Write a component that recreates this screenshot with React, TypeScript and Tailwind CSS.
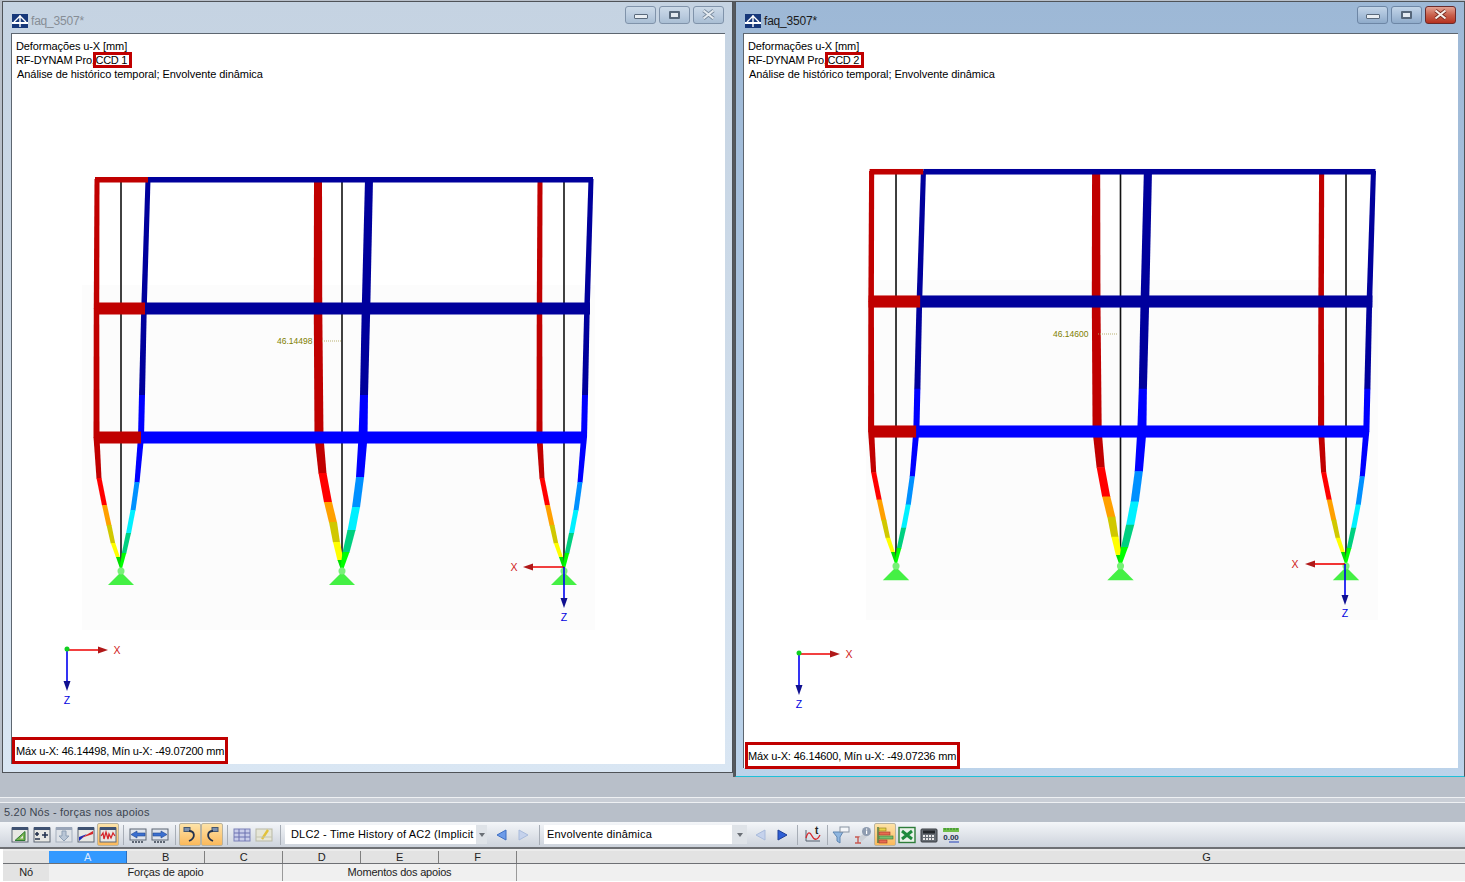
import type { ReactNode } from 'react';

// ── Frame drawing: coordinates are page pixels of the left window ────────────
type Station = [y: number, dx: number, w: number, color?: string];

const DARK_RED = '#c00000';
const DARK_BLUE = '#00009c';
const BLUE = '#0000ff';

const SIDE_RED: Station[] = [
  [179, -24, 5, DARK_RED], [308, -24.5, 5.5, DARK_RED], [437, -24.5, 6, DARK_RED], [478, -22, 5, '#ff0000'],
  [505, -16.5, 5, '#ffa000'], [525, -12, 5, '#d0c800'], [543, -8, 4.5, '#ffff00'], [557, -3, 4, '#00e000'], [568, 0, 2],
];
const SIDE_BLUE: Station[] = [
  [179, 27, 5, DARK_BLUE], [308, 23, 5.5, DARK_BLUE], [395, 21, 6, BLUE], [437, 20, 6, BLUE], [482, 16, 5, '#0090ff'],
  [510, 12, 5, '#00f0ff'], [533, 7.5, 5, '#00d080'], [553, 3, 4.5, '#00ff00'], [568, 0, 2],
];
const MID_RED: Station[] = [
  [179, -24, 8, DARK_RED], [308, -24, 8.5, DARK_RED], [437, -23, 9, DARK_RED], [473, -19.5, 8, '#ff0000'],
  [502, -14, 8, '#ffa000'], [522, -9, 8, '#d0c800'], [542, -5.5, 7, '#ffff00'], [560, -1.5, 6, '#00e000'], [568, 0, 3],
];
const MID_BLUE: Station[] = [
  [179, 27, 8, DARK_BLUE], [308, 24, 8.5, DARK_BLUE], [395, 22, 8, BLUE], [437, 21, 9, BLUE], [477, 18, 8, '#0090ff'],
  [507, 14, 8, '#00f0ff'], [530, 9.5, 8, '#00d080'], [552, 4, 7, '#00ff00'], [568, 0, 3],
];

function Side({ cx, stations }: { cx: number; stations: Station[] }) {
  return (
    <>
      {stations.slice(0, -1).map((a, i) => {
        const b = stations[i + 1];
        const ax = cx + a[1];
        const bx = cx + b[1];
        return (
          <polygon
            key={i}
            fill={a[3]}
            points={`${ax - a[2] / 2},${a[0]} ${ax + a[2] / 2},${a[0]} ${bx + b[2] / 2},${b[0] + 0.5} ${bx - b[2] / 2},${b[0] + 0.5}`}
          />
        );
      })}
    </>
  );
}

function Beam({ y, h, x0, x1, x2, color }: { y: number; h: number; x0: number; x1: number; x2: number; color: string }) {
  return (
    <>
      <rect x={x0} y={y} width={x1 - x0} height={h} fill={DARK_RED} />
      <rect x={x1} y={y} width={x2 - x1} height={h} fill={color} />
    </>
  );
}

function Support({ cx }: { cx: number }) {
  return (
    <>
      <polygon points={`${cx},572 ${cx + 13},585 ${cx - 13},585`} fill="#44f044" />
      <circle cx={cx} cy={571} r={3.5} fill="#78f078" />
    </>
  );
}

function Axes({ x, y, xDir, len, zLen, labelGap, zGap, origin }: { x: number; y: number; xDir: 1 | -1; len: number; zLen: number; labelGap: number; zGap: number; origin?: boolean }) {
  const tip = x + xDir * len;
  return (
    <g>
      <line x1={x} y1={y} x2={tip - xDir * 8} y2={y} stroke="#ee0000" strokeWidth={1.6} />
      <polygon points={`${tip},${y} ${tip - xDir * 10},${y - 3.5} ${tip - xDir * 10},${y + 3.5}`} fill="#b01818" />
      <line x1={x} y1={y} x2={x} y2={y + zLen - 8} stroke="#0000f0" strokeWidth={1.6} />
      <polygon points={`${x},${y + zLen} ${x - 3.5},${y + zLen - 10} ${x + 3.5},${y + zLen - 10}`} fill="#101090" />
      {origin && <circle cx={x} cy={y - 1} r={2.5} fill="#10d020" />}
      <text x={tip + xDir * labelGap} y={y + 3.5} textAnchor="middle" fontSize={10.5} fill="#d02020" fontFamily="'Liberation Sans', sans-serif">X</text>
      <text x={x} y={y + zLen + zGap} textAnchor="middle" fontSize={10.5} fill="#0000e0" fontFamily="'Liberation Sans', sans-serif">Z</text>
    </g>
  );
}

function Structure() {
  return (
    <g>
      {[121, 342, 564].map((cx) => (
        <line key={cx} x1={cx} y1={180} x2={cx} y2={566} stroke="#111" strokeWidth={1.6} />
      ))}
      <Side cx={121} stations={SIDE_RED} />
      <Side cx={121} stations={SIDE_BLUE} />
      <Side cx={342} stations={MID_RED} />
      <Side cx={342} stations={MID_BLUE} />
      <Side cx={564} stations={SIDE_RED} />
      <Side cx={564} stations={SIDE_BLUE} />
      <Beam y={177} h={5.5} x0={95} x1={148} x2={593} color={DARK_BLUE} />
      <Beam y={302.5} h={12} x0={94} x1={145} x2={590} color={DARK_BLUE} />
      <Beam y={431.5} h={12} x0={95} x1={141} x2={585} color={BLUE} />
      <Support cx={121} />
      <Support cx={342} />
      <Support cx={564} />
    </g>
  );
}

function Annotation({ x, y, value }: { x: number; y: number; value: string }) {
  return (
    <g>
      <text x={x} y={y + 3} fontSize={8.5} fill="#808000" fontFamily="'Liberation Sans', sans-serif">{value}</text>
      <line x1={x + 45} y1={y} x2={x + 65} y2={y} stroke="#b8b070" strokeWidth={1} strokeDasharray="1 1" />
    </g>
  );
}

// ── MDI child window with title bar and results viewport ─────────────────────
function CaptionButton({ children, close, active }: { children: ReactNode; close?: boolean; active: boolean }) {
  const tone = close && active
    ? 'border-[#6b2a2a] bg-gradient-to-b from-[#e2a294] via-[#c9604c] to-[#b5301e]'
    : active
      ? 'border-[#6d86a5] bg-gradient-to-b from-[#c3d5e8] via-[#a9c0da] to-[#8fabca]'
      : 'border-[#8093aa] bg-gradient-to-b from-[#ccdae8] via-[#bccde0] to-[#a9bed4]';
  return <div className={`grid h-[18px] w-[31px] place-items-center rounded-[3px] border ${tone}`}>{children}</div>;
}

function Window({ title, active, ccd, footer, viewBox, children, className, clientClass, footerClass }:
  { title: string; active: boolean; ccd: string; footer: string; viewBox: string; children: ReactNode; className: string; clientClass: string; footerClass: string }) {
  return (
    <div className={`flex flex-col border border-[#4f5358] ${active ? 'bg-gradient-to-b from-[#9db8d6] to-[#bcd3ea]' : 'bg-gradient-to-b from-[#c5d3e2] to-[#d9e6f3]'} ${className}`}>
      <div className="flex h-[31px] shrink-0 items-center pl-[9px]">
        <svg width="16" height="14" viewBox="0 0 16 14" className="mt-[7px] shrink-0">
          <rect width="16" height="14" fill="#17387a" />
          <path d="M0 8 H16 V10 H0 Z" fill="#fff" />
          <path d="M8 1 L8 13 M8 2 L2 8 M8 2 L14 8" stroke="#fff" strokeWidth="1.4" fill="none" />
        </svg>
        <span className={`ml-[3px] mt-[7px] text-[12px] tracking-[-0.2px] ${active ? 'text-[#1a1a1a]' : 'text-[#868d95]'}`}>{title}</span>
        <div className="ml-auto mr-[8px] mb-[6px] flex gap-[3px]">
          <CaptionButton active={active}>
            <span className="mt-[4px] block h-[5px] w-[14px] rounded-[1px] border border-[#5a6a7c] bg-[#e9eef3]" />
          </CaptionButton>
          <CaptionButton active={active}>
            <span className="block h-[8px] w-[11px] rounded-[1px] border-2 border-[#56677a] bg-[#e3eaf1]" />
          </CaptionButton>
          <CaptionButton close active={active}>
            <svg width="15" height="11" viewBox="0 0 15 11">
              <path d="M2.5 1.5 L12.5 9.5 M12.5 1.5 L2.5 9.5" stroke={active ? '#74261c' : '#75879a'} strokeWidth="3.6" />
              <path d="M2.5 1.5 L12.5 9.5 M12.5 1.5 L2.5 9.5" stroke={active ? '#f6eeea' : '#e4eaf0'} strokeWidth="2.2" />
            </svg>
          </CaptionButton>
        </div>
      </div>
      <div className={`relative flex flex-1 flex-col justify-between border-l border-t border-[#5d6670] bg-white text-[11px] leading-[14px] text-black ${clientClass}`}>
        <svg viewBox={viewBox} className="absolute inset-0 h-full w-full">{children}</svg>
        <div className="relative pl-[4px] pt-[5px]">
          <p className="tracking-[-0.1px]">Deformações u-X [mm]</p>
          <p className="tracking-[-0.2px]">RF-DYNAM Pro, <span className="-my-[1px] -ml-[5px] inline-block w-[39px] whitespace-nowrap border-[3px] border-[#c00000] leading-[10px] tracking-[-0.3px]">{ccd}</span></p>
          <p className="ml-px tracking-[-0.06px]">Análise de histórico temporal; Envolvente dinâmica</p>
        </div>
        <div className={`relative flex items-center whitespace-nowrap border-[3px] border-[#c00000] tracking-[-0.16px] ${footerClass}`}>{footer}</div>
      </div>
    </div>
  );
}

// ── Table toolbar ────────────────────────────────────────────────────────────
function Tool({ children, on }: { children: ReactNode; on?: boolean }) {
  return (
    <div className={`grid h-[23px] w-[22px] shrink-0 place-items-center rounded-[2px] ${on ? 'border border-[#b9b3a0] bg-gradient-to-b from-[#fde3a8] to-[#fbb95a]' : ''}`}>
      <svg width="18" height="18" viewBox="0 0 18 18">{children}</svg>
    </div>
  );
}

const Sep = ({ w }: { w: string }) => (
  <div className={`flex h-[20px] shrink-0 justify-center ${w}`}>
    <span className="w-px bg-[#a7adb6]" />
  </div>
);

const Sheet = ({ soft }: { soft?: boolean }) => (
  <>
    <rect x="1" y="2" width="16" height="14" fill={soft ? '#dfe3e8' : '#e8e8e4'} stroke={soft ? '#a5afbd' : '#5d6674'} />
    <rect x="1" y="1" width="16" height="3" fill={soft ? '#99a5b8' : '#3f5272'} />
  </>
);

function Arrow({ left, color, edge }: { left?: boolean; color: string; edge: string }) {
  return (
    <div className="grid h-[20px] w-[22px] shrink-0 place-items-center">
      <svg width="11" height="12" viewBox="0 0 11 12">
        <polygon points={left ? '1,6 10,1 10,11' : '10,6 1,1 1,11'} fill={color} stroke={edge} strokeWidth="1" />
      </svg>
    </div>
  );
}

function Combo({ text, w, btn }: { text: string; w: string; btn: string }) {
  return (
    <div className={`flex h-[19px] shrink-0 items-center bg-white text-[11px] tracking-[0.18px] text-black ${w}`}>
      <span className="flex-1 whitespace-nowrap">{text}</span>
      <span className={`grid h-full shrink-0 place-items-center bg-[#dfe3e8] ${btn}`}>
        <span className="block h-0 w-0 border-x-[3px] border-t-[4px] border-x-transparent border-t-[#6a6f76]" />
      </span>
    </div>
  );
}

function Toolbar() {
  return (
    <div className="flex h-[25px] items-center bg-gradient-to-b from-[#f4f6f9] to-[#cdd3dc] pl-[9px]">
      <Tool><Sheet /><polygon points="4,14.5 14,14.5 14,5.5" fill="#78b24e" stroke="#2d7a33" /><polygon points="9,12.5 12,12.5 12,9.5" fill="#e8e8e4" /></Tool>
      <Tool><Sheet /><path d="M4 6 V10 M2 8 H6 M2 13 H7 M9 9 H15 M12 6 V12" stroke="#23324e" strokeWidth="1.6" fill="none" /></Tool>
      <Tool><Sheet soft /><path d="M7 5 H11 V10 H14 L9 15 L4 10 H7 Z" fill="#b9c6d6" stroke="#8fa0b5" /></Tool>
      <Tool><Sheet /><polygon points="2,15 2,11 10,8" fill="#1b2fb8" /><polygon points="4,12 16,5 16,8" fill="#d6262b" /></Tool>
      <Tool on><Sheet /><path d="M2 10 L4 7 L5 13 L7 6 L9 13 L10 8 L12 12 L14 7 L16 10" stroke="#d6262b" strokeWidth="1.3" fill="none" /></Tool>
      <Sep w="w-[8px]" />
      <Tool><rect x="1" y="3" width="16" height="11" fill="#dfe4ec" stroke="#5d6674" /><path d="M3 16 H15" stroke="#5d6674" strokeDasharray="2 1" strokeWidth="2" /><polygon points="2,8.5 8,5 8,7 16,7 16,10 8,10 8,12" fill="#3a6fd0" stroke="#23468f" strokeWidth="0.6" /></Tool>
      <Tool><rect x="1" y="3" width="16" height="11" fill="#dfe4ec" stroke="#5d6674" /><path d="M3 16 H15" stroke="#5d6674" strokeDasharray="2 1" strokeWidth="2" /><polygon points="16,8.5 10,5 10,7 2,7 2,10 10,10 10,12" fill="#3a6fd0" stroke="#23468f" strokeWidth="0.6" /></Tool>
      <Sep w="w-[8px]" />
      <Tool on><rect x="3" y="1.5" width="6" height="4" fill="#7d90ad" stroke="#44566f" /><path d="M8 5 C14 5 15 12 8 15" stroke="#23324e" strokeWidth="1.8" fill="none" /></Tool>
      <Tool on><rect x="9" y="1.5" width="6" height="4" fill="#7d90ad" stroke="#44566f" /><path d="M10 5 C4 5 3 12 10 15" stroke="#23324e" strokeWidth="1.8" fill="none" /></Tool>
      <Sep w="w-[8px]" />
      <Tool><rect x="1" y="3" width="16" height="12" fill="#c9cdea" stroke="#7a80b8" /><path d="M1 7 H17 M1 11 H17 M6 3 V15 M12 3 V15" stroke="#6a70b0" /></Tool>
      <Tool><rect x="1" y="3" width="16" height="12" fill="#e6e6d8" stroke="#b9b9a5" /><path d="M7 13 L13 4" stroke="#e2c23a" strokeWidth="2.4" /><path d="M1 11 H17" stroke="#c4c4b0" /></Tool>
      <Sep w="w-[10px]" />
      <Combo text="DLC2 - Time History of AC2 (Implicit" w="w-[202px] pl-[6px]" btn="w-[11px]" />
      <div className="w-[3px] shrink-0" />
      <Arrow left color="#6d9be8" edge="#3e6fc4" />
      <Arrow color="#c5d2ec" edge="#a9bbdc" />
      <Sep w="w-[10px]" />
      <Combo text="Envolvente dinâmica" w="w-[203px] pl-[3px]" btn="w-[15px]" />
      <div className="w-[2px] shrink-0" />
      <Arrow left color="#c5d2ec" edge="#a9bbdc" />
      <Arrow color="#2f5fd6" edge="#1f3f96" />
      <Sep w="w-[9px]" />
      <Tool>
        <path d="M2 4 V15 H16" stroke="#55606e" fill="none" />
        <path d="M2 12 C4 5 6 6 8 10 S13 15 16 9" stroke="#d6262b" strokeWidth="1.3" fill="none" />
        <text x="11" y="8" fontSize="10" fontWeight="700" fill="#222" fontFamily="'Liberation Sans', sans-serif">t</text>
      </Tool>
      <Sep w="w-[6px]" />
      <Tool><polygon points="1,6 11,6 8,11 8,17 5,15 5,11" fill="#8fb6e0" stroke="#5f86b2" /><rect x="8" y="1" width="9" height="5" fill="#f4f6f9" stroke="#8893a2" /></Tool>
      <Tool><path d="M1 11 H7 M1 17 H7 M4 11 V17" stroke="#c75a52" strokeWidth="1.4" /><polygon points="5,11 12,6 15,9 7,16" fill="#ccd0d6" /><circle cx="12.5" cy="5.5" r="4.5" fill="#8f9cb0" /><rect x="12" y="4.5" width="1.2" height="3.5" fill="#fff" /><rect x="12" y="2.5" width="1.2" height="1.2" fill="#fff" /></Tool>
      <Tool on><path d="M2 1 V17" stroke="#2f6b3a" strokeWidth="1.3" /><rect x="3" y="2" width="7" height="3" fill="#e8d34a" stroke="#8d7a1a" strokeWidth="0.6" /><rect x="3" y="6" width="11" height="3" fill="#e86a50" stroke="#963a2a" strokeWidth="0.6" /><rect x="3" y="10" width="14" height="3" fill="#78bd6c" stroke="#3a7a3a" strokeWidth="0.6" /><rect x="3" y="14" width="8" height="3" fill="#e86a50" stroke="#963a2a" strokeWidth="0.6" /></Tool>
      <Tool><rect x="1" y="1.5" width="16" height="15" fill="#eaf3ea" stroke="#2e7d3a" strokeWidth="1.4" /><path d="M4 5 L14 13 M14 5 L4 13" stroke="#1f8a3c" strokeWidth="3" /></Tool>
      <Tool>
        <rect x="1" y="3" width="16" height="13" rx="1" fill="#666c73" stroke="#3a3f45" />
        <rect x="3" y="4.5" width="12" height="3" fill="#23272b" />
        <path d="M3 10 H15 M3 13 H15" stroke="#e8e8e8" strokeWidth="2" strokeDasharray="2 1" />
      </Tool>
      <Tool>
        <rect x="1" y="2" width="16" height="4" fill="#6fbf4a" />
        <path d="M3 2 V4 M6 2 V4 M9 2 V4 M12 2 V4 M15 2 V4" stroke="#2e7d2e" />
        <text x="9" y="14" textAnchor="middle" fontSize="8" fontWeight="700" fill="#23324e" fontFamily="'Liberation Sans', sans-serif">0.00</text>
        <path d="M7 16 H17" stroke="#2340b8" />
      </Tool>
    </div>
  );
}

// ── Result table header ──────────────────────────────────────────────────────
const COLS = [
  { key: 'A', cls: 'w-[78px] border-[#2a6fc0] bg-[#3399ff] text-[#dbeaff]' },
  { key: 'B', cls: 'w-[78px] border-[#7f7f7f] bg-[#e3e3e3] text-[#222]' },
  { key: 'C', cls: 'w-[78px] border-[#7f7f7f] bg-[#e3e3e3] text-[#222]' },
  { key: 'D', cls: 'w-[78px] border-[#7f7f7f] bg-[#e3e3e3] text-[#222]' },
  { key: 'E', cls: 'w-[78px] border-[#7f7f7f] bg-[#e3e3e3] text-[#222]' },
  { key: 'F', cls: 'w-[78px] border-[#7f7f7f] bg-[#e3e3e3] text-[#222]' },
  { key: 'G', cls: 'w-[1380px] border-[#7f7f7f] bg-[#e3e3e3] text-[#222]' },
];

function Table() {
  return (
    <div className="flex-1 border-t-2 border-[#6e7074] bg-white pl-[3px] text-[11px] leading-[13px] tracking-[-0.2px] text-[#222]">
      <div className="flex h-[15px] border-b border-[#6e7074] bg-[#ececec] pt-[2px]">
        <div className="w-[46px] shrink-0 bg-[#e3e3e3]" />
        {COLS.map((c) => (
          <div key={c.key} className={`shrink-0 border-r text-center ${c.cls}`}>{c.key}</div>
        ))}
      </div>
      <div className="flex h-[17px] items-center bg-[#f0f0f0]">
        <div className="flex h-full w-[46px] shrink-0 items-center justify-center bg-[#e3e3e3]">Nó</div>
        <div className="flex h-full w-[234px] shrink-0 items-center justify-center border-r border-[#9a9a9a]">Forças de apoio</div>
        <div className="flex h-full w-[234px] shrink-0 items-center justify-center border-r border-[#9a9a9a]">Momentos dos apoios</div>
      </div>
    </div>
  );
}

export default function App() {
  return (
    <div className="flex h-[882px] w-[1465px] flex-col overflow-hidden bg-[#b8bfc9] font-['Liberation_Sans',Arial,sans-serif]">
      <div className="flex h-[797px] shrink-0 items-start pl-[2px] pt-[1px]">
        <Window
          title="faq_3507*"
          active={false}
          ccd="CCD 1"
          footer="Máx u-X: 46.14498, Mín u-X: -49.07200 mm"
          viewBox="12 34 713 730"
          className="h-[772px] w-[731px] shrink-0"
          clientClass="ml-[8px] mr-[7px] mb-[8px]"
          footerClass="h-[27px] w-[216px] pl-[1px]"
        >
          <rect x="82" y="285" width="513" height="345" fill="#fcfcfc" />
          <Structure />
          <Axes x={564} y={567} xDir={-1} len={41} zLen={41} labelGap={9} zGap={13} />
          <Axes x={67} y={650} xDir={1} len={41} zLen={41} labelGap={9} zGap={13} origin />
          <Annotation x={277} y={341} value="46.14498" />
        </Window>
        <div className="h-[776px] w-[2px] shrink-0 bg-[#55595e]" />
        <Window
          title="faq_3507*"
          active
          ccd="CCD 2"
          footer="Máx u-X: 46.14600, Mín u-X: -49.07236 mm"
          viewBox="744 34 714 734"
          className="h-[776px] w-[730px] shrink-0 border-b-[#20c0d8]"
          clientClass="ml-[7px] mr-[6px] mb-[8px]"
          footerClass="-mb-px ml-px h-[27px] w-[215px]"
        >
          <rect x="866" y="280" width="512" height="340" fill="#fcfcfc" />
          <g transform="translate(773.1 -9.4) scale(1.0158 1.0078)"><Structure /></g>
          <Axes x={1345} y={564} xDir={-1} len={40} zLen={41} labelGap={10} zGap={12} />
          <Axes x={799} y={654} xDir={1} len={41} zLen={41} labelGap={9} zGap={13} origin />
          <Annotation x={1053} y={334} value="46.14600" />
        </Window>
      </div>
      <div className="h-[6px] shrink-0 border-y border-[#eef0f3] bg-[#c9ced6]" />
      <div className="flex h-[19px] shrink-0 items-center pl-[4px] text-[11px] tracking-[0.2px] text-[#3b4450]">5.20 Nós - forças nos apoios</div>
      <Toolbar />
      <Table />
    </div>
  );
}
